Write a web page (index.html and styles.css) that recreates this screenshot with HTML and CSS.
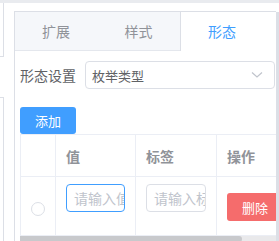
FILE: index.html
```html
<!DOCTYPE html>
<html>
<head>
<meta charset="utf-8">
<link rel="stylesheet" href="styles.css">
</head>
<body>
<div class="topbar"></div>
<div class="layout">
  <div class="side">
    <div class="side-box1"></div>
    <div class="side-box2"></div>
  </div>
  <div class="main">
    <div class="tabs">
      <div class="tab t1">扩展</div>
      <div class="tab t2">样式</div>
      <div class="tab active">形态</div>
    </div>
    <div class="content">
      <div class="form-row">
        <div class="label">形态设置</div>
        <div class="select">
          <span class="select-text">枚举类型</span>
          <svg class="chev" width="12" height="8" viewBox="0 0 12 8"><polyline points="1,1.5 6,6 11,1.5" fill="none" stroke="#c0c4cc" stroke-width="1.2"/></svg>
        </div>
      </div>
      <button class="btn-add">添加</button>
      <div class="table-wrap">
        <table class="tbl">
          <colgroup>
            <col class="c1"><col class="c2"><col class="c3"><col class="c4">
          </colgroup>
          <thead>
            <tr><th></th><th>值</th><th>标签</th><th>操作</th></tr>
          </thead>
          <tbody>
            <tr>
              <td class="radio-cell"><span class="radio"></span></td>
              <td><div class="inp focus"><span class="ph">请输入值</span></div></td>
              <td><div class="inp"><span class="ph">请输入标签</span></div></td>
              <td><button class="btn-del">删除</button></td>
            </tr>
          </tbody>
        </table>
      </div>
      <div class="hscroll"><div class="thumb"></div></div>
    </div>
  </div>
  <div class="rightbar"></div>
</div>
</body>
</html>
```
FILE: styles.css
```css
* { box-sizing: border-box; }
html, body { margin: 0; padding: 0; }
body {
  width: 279px;
  height: 241px;
  overflow: hidden;
  background: #fff;
  font-family: "Noto Sans CJK SC", "Noto Sans", sans-serif;
  font-size: 14px;
  color: #606266;
}
.topbar { height: 3px; background: #e9ebef; }
.layout { display: flex; height: 238px; }
.side { width: 4px; display: flex; flex-direction: column; }
.side-box1 { height: 54px; border-right: 1px solid #dcdfe6; border-bottom: 1px solid #dcdfe6; }
.side-box2 { flex: 1; margin-top: 40px; border-right: 1px solid #dcdfe6; border-top: 1px solid #dcdfe6; }
.main {
  margin-left: 10px;
  margin-top: 8px;
  flex: 1;
  min-width: 0;
  border-left: 1px solid #dcdfe6;
  border-top: 1px solid #dcdfe6;
  overflow: hidden;
}
.rightbar { width: 3px; margin-top: 9px; background: #dcdfe6; }
.tabs {
  display: flex;
  height: 39px;
  background: #f5f7fa;
  border-bottom: 1px solid #e4e7ed;
}
.tab {
  height: 38px;
  line-height: 38px;
  text-align: center;
  color: #909399;
  font-size: 14px;
}
.t1 { width: 82px; }
.t2 { width: 83px; }
.tab.active {
  flex: 1;
  height: 39px;
  background: #fff;
  color: #409eff;
  border-left: 1px solid #dcdfe6;
  padding-right: 13px;
}
.content { padding: 10px 0 0 5px; }
.form-row { display: flex; align-items: center; height: 28px; }
.label { width: 65px; font-size: 14px; color: #606266; }
.select {
  flex: 1;
  height: 28px;
  border: 1px solid #dcdfe6;
  border-radius: 4px;
  display: flex;
  align-items: center;
  padding: 0 11px 0 6px;
  margin-right: 1px;
}
.select-text { flex: 1; font-size: 13px; color: #606266; }
.chev { display: block; }
.btn-add {
  display: block;
  margin-top: 18px;
  width: 56px;
  height: 27px;
  border: none;
  border-radius: 3px;
  background: #409eff;
  color: #fff;
  font-family: inherit;
  font-size: 13px;
  padding: 0;
}
.table-wrap { width: 256px; overflow: hidden; }
.tbl {
  width: 295px;
  table-layout: fixed;
  border-collapse: collapse;
}
.c1 { width: 35px; }
.c2 { width: 80px; }
.c3 { width: 81px; }
.c4 { width: 99px; }
.tbl th, .tbl td {
  border: 1px solid #ebeef5;
  padding: 0 10px;
  text-align: left;
  vertical-align: middle;
}
.tbl th {
  height: 42px;
  color: #909399;
  font-weight: bold;
  font-size: 14px;
}
.tbl td { height: 59px; }
.tbl td.radio-cell { padding: 0; text-align: center; }
.radio {
  display: inline-block;
  width: 14px;
  height: 14px;
  border: 1px solid #dcdfe6;
  border-radius: 50%;
  vertical-align: middle;
  margin-top: 1px;
}
.inp {
  height: 28px;
  border: 1px solid #dcdfe6;
  border-radius: 4px;
  padding: 0 7px;
  overflow: hidden;
  white-space: nowrap;
  line-height: 26px;
  margin-bottom: 17px;
}
.inp.focus { border-color: #409eff; }
.ph { color: #c0c4cc; font-size: 14px; }
.btn-del {
  display: block;
  width: 56px;
  height: 28px;
  border: none;
  border-radius: 3px;
  background: #f56c6c;
  color: #fff;
  font-family: inherit;
  font-size: 13px;
  padding: 0;
  margin-top: 2px;
}
.hscroll { width: 256px; height: 6px; background: #e9e9eb; }
.thumb { width: 222px; height: 6px; background: #c8c9cc; border-radius: 0 3px 3px 0; }
```
